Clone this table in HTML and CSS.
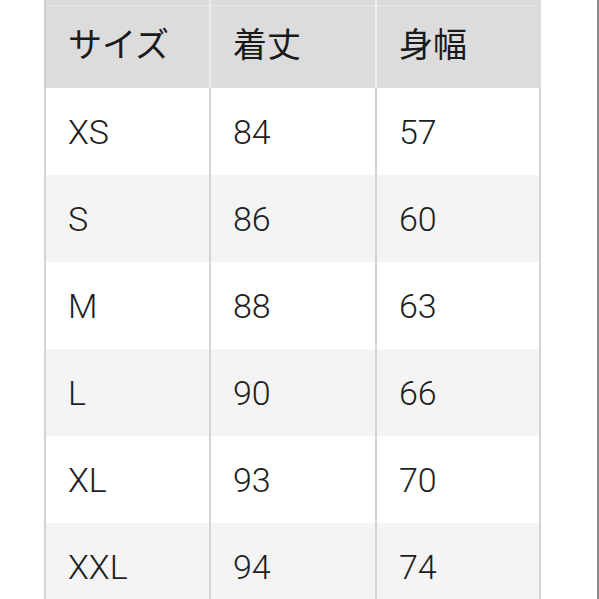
FILE: index.html
```html
<!DOCTYPE html>
<html lang="ja">
<head>
<meta charset="utf-8">
<link rel="stylesheet" href="styles.css">
</head>
<body>
<div class="page">
  <div class="table">
    <div class="row head">
      <div class="cell jp">サイズ</div>
      <div class="cell jp">着丈</div>
      <div class="cell jp">身幅</div>
    </div>
    <div class="row">
      <div class="cell">XS</div><div class="cell">84</div><div class="cell">57</div>
    </div>
    <div class="row alt">
      <div class="cell">S</div><div class="cell">86</div><div class="cell">60</div>
    </div>
    <div class="row">
      <div class="cell">M</div><div class="cell">88</div><div class="cell">63</div>
    </div>
    <div class="row alt">
      <div class="cell">L</div><div class="cell">90</div><div class="cell">66</div>
    </div>
    <div class="row">
      <div class="cell">XL</div><div class="cell">93</div><div class="cell">70</div>
    </div>
    <div class="row alt">
      <div class="cell">XXL</div><div class="cell">94</div><div class="cell">74</div>
    </div>
  </div>
</div>
</body>
</html>
```
FILE: styles.css
```css
html, body {
  margin: 0;
  padding: 0;
  background: #ffffff;
}
.page {
  box-sizing: border-box;
  width: 599px;
  height: 599px;
  overflow: hidden;
  border-right: 2px solid #8c8c8c;
  padding-left: 44px;
}
.table {
  width: 497px;
  display: flex;
  flex-direction: column;
  font-family: Roboto, "Liberation Sans", "Noto Sans CJK JP", sans-serif;
  font-weight: 300;
  color: #1e1e1e;
}
.row {
  display: grid;
  grid-template-columns: 165px 166px 166px;
  height: 87px;
  background: #ffffff;
}
.row.alt {
  background: #f4f4f4;
}
.row.head {
  height: 88px;
  background: linear-gradient(#dadada 5px, #e6e6e6 5px, #e6e6e6 6px, #dcdcdc 6px);
}
.cell {
  display: flex;
  align-items: center;
  padding-left: 22px;
  font-size: 34px;
  border-left: 2px solid #d4d4d4;
}
.cell:last-child {
  border-right: 2px solid #d4d4d4;
}
.head .cell {
  border-left-color: #ececec;
}
.head .cell:first-child {
  border-left-color: #cfcfcf;
}
.head .cell:last-child {
  border-right-color: #dcdcdc;
}
.jp {
  font-family: "Noto Sans CJK JP", sans-serif;
  font-weight: 400;
  font-size: 34px;
  color: #1a1a1a;
  padding-bottom: 4px;
  box-sizing: border-box;
}
```
